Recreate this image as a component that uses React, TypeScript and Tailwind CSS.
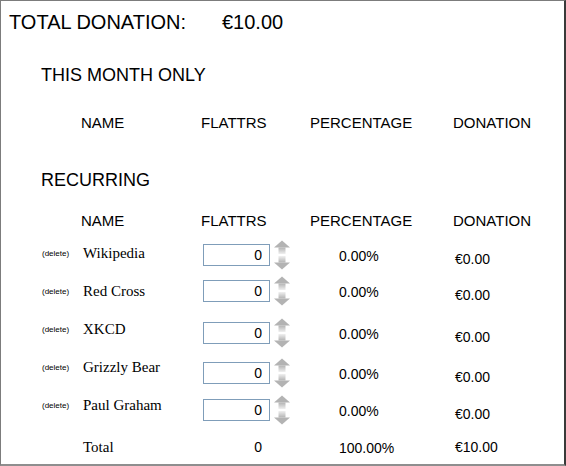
const sans = "font-['Liberation_Sans',Arial,sans-serif]";
const serif = "font-['Liberation_Serif','Times_New_Roman',serif]";

type Row = { name: string; shift: string };

const rows: Row[] = [
  { name: 'Wikipedia', shift: 'mt-[2px]' },
  { name: 'Red Cross', shift: 'mt-[0px]' },
  { name: 'XKCD', shift: 'mt-[4px]' },
  { name: 'Grizzly Bear', shift: 'mt-[6px]' },
  { name: 'Paul Graham', shift: 'mt-[5px]' },
];

function Spinner() {
  return (
    <svg width="16" height="30" viewBox="0 0 16 30" className="ml-[4px] shrink-0">
      <defs>
        <linearGradient id="stemUp" x1="0" y1="0" x2="0" y2="1">
          <stop offset="0" stopColor="#b3b3b3" />
          <stop offset="1" stopColor="#f0f0f0" />
        </linearGradient>
        <linearGradient id="stemDown" x1="0" y1="0" x2="0" y2="1">
          <stop offset="0" stopColor="#f0f0f0" />
          <stop offset="1" stopColor="#b3b3b3" />
        </linearGradient>
      </defs>
      <polygon points="8,0.5 16,7.5 0,7.5" fill="#b3b3b3" />
      <rect x="4.5" y="7.5" width="7" height="6.5" fill="url(#stemUp)" />
      <rect x="4.5" y="16" width="7" height="6.5" fill="url(#stemDown)" />
      <polygon points="0,22.5 16,22.5 8,29.5" fill="#b3b3b3" />
    </svg>
  );
}

function HeaderRow() {
  return (
    <div className="flex pl-[80px] text-[15px] leading-[18px]">
      <div className="w-[120px]">NAME</div>
      <div className="w-[109px]">FLATTRS</div>
      <div className="w-[143px]">PERCENTAGE</div>
      <div>DONATION</div>
    </div>
  );
}

export default function App() {
  return (
    <div
      className={`w-[566px] h-[466px] box-border bg-white text-black border-t border-l border-[#7c7c7c] border-r-2 border-r-[#3a3a3a] border-b-2 border-b-[#8e8e8e] ${sans}`}
    >
      <div className="flex mt-[9px] pl-[8px] text-[20px] leading-[24px]">
        <div className="w-[213px]">TOTAL DONATION:</div>
        <div>€10.00</div>
      </div>

      <div className="mt-[30px] pl-[40px] text-[18px] leading-[22px]">THIS MONTH ONLY</div>
      <div className="mt-[28px]">
        <HeaderRow />
      </div>

      <div className="mt-[37px] pl-[40px] text-[18px] leading-[22px]">RECURRING</div>
      <div className="mt-[21px]">
        <HeaderRow />
      </div>

      <div className="mt-[12px] flex flex-col">
        {rows.map((row) => (
          <div key={row.name} className="flex items-start h-[38px] pl-[41px]">
            <div className="w-[41px] mt-[7px] text-[8px] leading-[10px]">(delete)</div>
            <div className={`w-[120px] mt-[2px] text-[15px] leading-[18px] ${serif}`}>{row.name}</div>
            <div className={`flex items-start ${row.shift}`}>
              <div className="flex items-center h-[22px]">
                <input
                  readOnly
                  value="0"
                  className="w-[67px] h-[22px] box-border border border-[#7f9db9] bg-white pr-[7px] text-right text-[14px] leading-[20px] outline-none"
                />
                <Spinner />
              </div>
              <div className="ml-[49px] w-[116px] mt-[1px] text-[14px] leading-[22px]">0.00%</div>
              <div className="mt-[4px] text-[14px] leading-[22px]">€0.00</div>
            </div>
          </div>
        ))}

        <div className="flex items-start mt-[6px] pl-[82px]">
          <div className={`w-[120px] text-[15px] leading-[18px] ${serif}`}>Total</div>
          <div className="w-[67px] pr-[8px] text-right text-[14px] leading-[18px]">0</div>
          <div className="ml-[69px] w-[116px] mt-[1px] text-[14px] leading-[18px]">100.00%</div>
          <div className="text-[14px] leading-[18px]">€10.00</div>
        </div>
      </div>
    </div>
  );
}
